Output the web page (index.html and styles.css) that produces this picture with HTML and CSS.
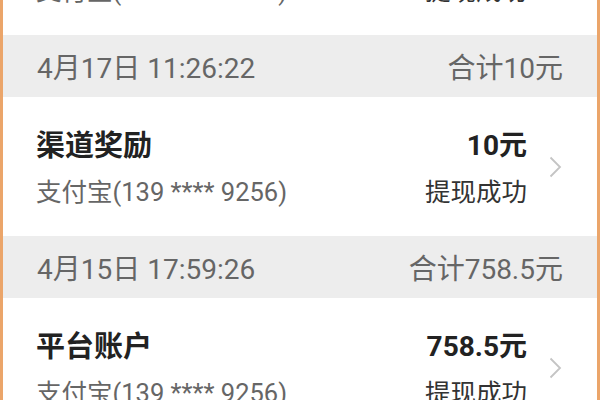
FILE: index.html
```html
<!DOCTYPE html>
<html lang="zh-CN">
<head>
    <meta charset="UTF-8">
    <meta name="viewport" content="width=device-width, initial-scale=1.0">
    <title>提现记录</title>
    <link rel="stylesheet" href="styles.css">
</head>
<body>
    <div class="page">
        <div class="list">
            <div class="item">
                <div class="item-main">
                    <div class="item-title">平台账户</div>
                    <div class="item-sub">支付宝(139 **** 9256)</div>
                </div>
                <div class="item-side">
                    <div class="item-amount">20元</div>
                    <div class="item-status">提现成功</div>
                </div>
                <span class="chevron"><svg width="13" height="22" viewBox="0 0 13 22"><path d="M1.5 1.5 L11 11 L1.5 20.5" fill="none" stroke="#c4c4c4" stroke-width="1.8"/></svg></span>
            </div>

            <div class="group-head">
                <span>4月17日 11:26:22</span>
                <span>合计10元</span>
            </div>
            <div class="item">
                <div class="item-main">
                    <div class="item-title">渠道奖励</div>
                    <div class="item-sub">支付宝(139 **** 9256)</div>
                </div>
                <div class="item-side">
                    <div class="item-amount">10元</div>
                    <div class="item-status">提现成功</div>
                </div>
                <span class="chevron"><svg width="13" height="22" viewBox="0 0 13 22"><path d="M1.5 1.5 L11 11 L1.5 20.5" fill="none" stroke="#c4c4c4" stroke-width="1.8"/></svg></span>
            </div>

            <div class="group-head">
                <span>4月15日 17:59:26</span>
                <span>合计758.5元</span>
            </div>
            <div class="item">
                <div class="item-main">
                    <div class="item-title">平台账户</div>
                    <div class="item-sub">支付宝(139 **** 9256)</div>
                </div>
                <div class="item-side">
                    <div class="item-amount">758.5元</div>
                    <div class="item-status">提现成功</div>
                </div>
                <span class="chevron"><svg width="13" height="22" viewBox="0 0 13 22"><path d="M1.5 1.5 L11 11 L1.5 20.5" fill="none" stroke="#c4c4c4" stroke-width="1.8"/></svg></span>
            </div>
        </div>
    </div>
</body>
</html>
```

FILE: styles.css
```css
html, body {
    margin: 0;
    padding: 0;
}
body {
    font-family: Roboto, "Noto Sans CJK SC", sans-serif;
    background: #fff;
}
.page {
    height: 400px;
    overflow: hidden;
    border-left: 3px solid #eba56a;
    border-right: 3px solid #eba56a;
    background: #fff;
}
.list {
    margin-top: -104px; /* list is scrolled, first row mostly hidden */
}
.group-head {
    height: 62px;
    display: flex;
    align-items: center;
    justify-content: space-between;
    padding: 0 34px;
    background: #ededed;
    color: #666;
    font-size: 28px;
}
.item {
    height: 139px;
    box-sizing: border-box;
    display: flex;
    padding: 31px 35px 0 33px;
}
.item-main {
    flex: 1;
}
.item-side {
    text-align: right;
}
.item-title,
.item-amount {
    font-weight: bold;
    line-height: 36px;
    color: #222;
    margin-bottom: 10px;
}
.item-title {
    font-size: 29px;
}
.item-amount {
    font-size: 28px;
}
.item-sub,
.item-status {
    font-size: 25.5px;
    line-height: 36px;
}
.item-sub {
    color: #666;
}
.item-status {
    color: #333;
}
.chevron {
    display: flex;
    align-self: center;
    margin: -31px 0 0 22px;
}
```
